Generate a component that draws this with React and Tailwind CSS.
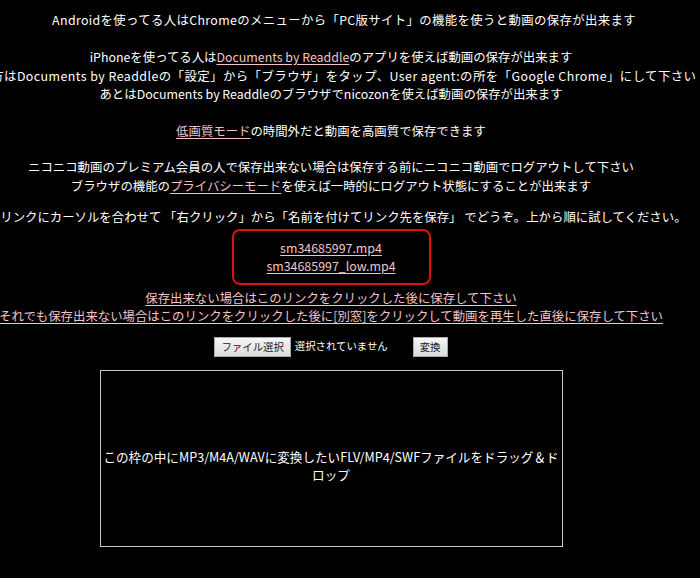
import React from 'react';

const Link = ({ children }) => (
  <a href="#" className="text-[#f2c4c8] underline underline-offset-2">
    {children}
  </a>
);

const FormButton = ({ children, className = '' }) => (
  <button
    className={`h-[20px] px-[6px] bg-gradient-to-b from-[#f6f6f6] to-[#dcdcdc] border border-[#a8a8a8] text-[#222] text-[10.4px] leading-[18px] ${className}`}
  >
    {children}
  </button>
);

const App = () => {
  return (
    <div
      className="min-h-[578px] bg-black text-white overflow-hidden"
      style={{ fontFamily: '"Noto Sans CJK JP", "Noto Sans", sans-serif' }}
    >
      <div className="w-[662px] flex flex-col items-center text-[12.4px] leading-[18.5px] whitespace-nowrap">
        {/* Android */}
        <p className="mt-[11px] ml-[26px] tracking-[0.35px]">
          Androidを使ってる人はChromeのメニューから「PC版サイト」の機能を使うと動画の保存が出来ます
        </p>

        {/* iPhone */}
        <div className="mt-[18.5px] flex flex-col items-center">
          <p>
            iPhoneを使ってる人は<Link>Documents by Readdle</Link>のアプリを使えば動画の保存が出来ます
          </p>
          <p className="tracking-[0.45px]">
            やり方はDocuments by Readdleの「設定」から「ブラウザ」をタップ、User agent:の所を「Google Chrome」にして下さい
          </p>
          <p>あとはDocuments by Readdleのブラウザでnicozonを使えば動画の保存が出来ます</p>
        </div>

        <p className="mt-[18px]">
          <Link>低画質モード</Link>の時間外だと動画を高画質で保存できます
        </p>

        {/* Premium */}
        <div className="mt-[18px] flex flex-col items-center">
          <p>ニコニコ動画のプレミアム会員の人で保存出来ない場合は保存する前にニコニコ動画でログアウトして下さい</p>
          <p>
            ブラウザの機能の<Link>プライバシーモード</Link>を使えば一時的にログアウト状態にすることが出来ます
          </p>
        </div>

        <p className="mt-[12.5px]">
          下のリンクにカーソルを合わせて 「右クリック」から「名前を付けてリンク先を保存」 でどうぞ。上から順に試してください。
        </p>

        {/* Download links */}
        <div className="mt-[2.5px] w-[199px] h-[56px] border-2 border-[#e01010] rounded-lg flex flex-col items-center pt-[8px]">
          <Link>sm34685997.mp4</Link>
          <Link>sm34685997_low.mp4</Link>
        </div>

        <div className="mt-[4px] flex flex-col items-center">
          <Link>保存出来ない場合はこのリンクをクリックした後に保存して下さい</Link>
          <Link>それでも保存出来ない場合はこのリンクをクリックした後に[別窓]をクリックして動画を再生した直後に保存して下さい</Link>
        </div>

        {/* File convert */}
        <div className="mt-[11px] flex items-center h-[20px]">
          <FormButton>ファイル選択</FormButton>
          <span className="ml-[4px] text-[10.4px]">選択されていません</span>
          <FormButton className="ml-[25px]">変換</FormButton>
        </div>

        {/* Drop area */}
        <div className="mt-[13px] w-[463px] h-[177px] border border-[#c8c8c8] flex items-center justify-center pt-[15px] text-center text-[12.6px] leading-[17.5px]">
          <p>
            この枠の中にMP3/M4A/WAVに変換したいFLV/MP4/SWFファイルをドラッグ＆ド
            <br />
            ロップ
          </p>
        </div>
      </div>
    </div>
  );
};

export default App;
